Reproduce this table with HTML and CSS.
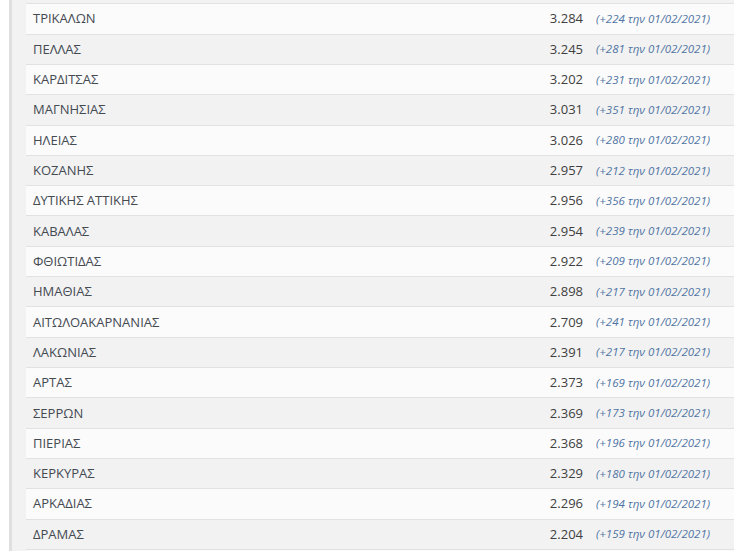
FILE: index.html
```html
<!DOCTYPE html>
<html lang="el">
<head>
<meta charset="utf-8">
<link rel="stylesheet" href="styles.css">
</head>
<body>
<div class="panel">
  <div class="list">
    <div class="row"><span class="name">ΤΡΙΚΑΛΩΝ</span><span class="num">3.284</span><span class="delta">(+224 την 01/02/2021)</span></div>
    <div class="row"><span class="name">ΠΕΛΛΑΣ</span><span class="num">3.245</span><span class="delta">(+281 την 01/02/2021)</span></div>
    <div class="row"><span class="name">ΚΑΡΔΙΤΣΑΣ</span><span class="num">3.202</span><span class="delta">(+231 την 01/02/2021)</span></div>
    <div class="row"><span class="name">ΜΑΓΝΗΣΙΑΣ</span><span class="num">3.031</span><span class="delta">(+351 την 01/02/2021)</span></div>
    <div class="row"><span class="name">ΗΛΕΙΑΣ</span><span class="num">3.026</span><span class="delta">(+280 την 01/02/2021)</span></div>
    <div class="row"><span class="name">ΚΟΖΑΝΗΣ</span><span class="num">2.957</span><span class="delta">(+212 την 01/02/2021)</span></div>
    <div class="row"><span class="name">ΔΥΤΙΚΗΣ ΑΤΤΙΚΗΣ</span><span class="num">2.956</span><span class="delta">(+356 την 01/02/2021)</span></div>
    <div class="row"><span class="name">ΚΑΒΑΛΑΣ</span><span class="num">2.954</span><span class="delta">(+239 την 01/02/2021)</span></div>
    <div class="row"><span class="name">ΦΘΙΩΤΙΔΑΣ</span><span class="num">2.922</span><span class="delta">(+209 την 01/02/2021)</span></div>
    <div class="row"><span class="name">ΗΜΑΘΙΑΣ</span><span class="num">2.898</span><span class="delta">(+217 την 01/02/2021)</span></div>
    <div class="row"><span class="name">ΑΙΤΩΛΟΑΚΑΡΝΑΝΙΑΣ</span><span class="num">2.709</span><span class="delta">(+241 την 01/02/2021)</span></div>
    <div class="row"><span class="name">ΛΑΚΩΝΙΑΣ</span><span class="num">2.391</span><span class="delta">(+217 την 01/02/2021)</span></div>
    <div class="row"><span class="name">ΑΡΤΑΣ</span><span class="num">2.373</span><span class="delta">(+169 την 01/02/2021)</span></div>
    <div class="row"><span class="name">ΣΕΡΡΩΝ</span><span class="num">2.369</span><span class="delta">(+173 την 01/02/2021)</span></div>
    <div class="row"><span class="name">ΠΙΕΡΙΑΣ</span><span class="num">2.368</span><span class="delta">(+196 την 01/02/2021)</span></div>
    <div class="row"><span class="name">ΚΕΡΚΥΡΑΣ</span><span class="num">2.329</span><span class="delta">(+180 την 01/02/2021)</span></div>
    <div class="row"><span class="name">ΑΡΚΑΔΙΑΣ</span><span class="num">2.296</span><span class="delta">(+194 την 01/02/2021)</span></div>
    <div class="row"><span class="name">ΔΡΑΜΑΣ</span><span class="num">2.204</span><span class="delta">(+159 την 01/02/2021)</span></div>
    <div class="row"><span class="name">&nbsp;</span><span class="num"></span><span class="delta"></span></div>
  </div>
</div>
</body>
</html>
```

FILE: styles.css
```css
html, body {
  margin: 0;
  padding: 0;
  background: #ffffff;
  overflow: hidden;
}

body {
  font-family: "Open Sans", "Noto Sans", sans-serif;
  color: #444444;
}

.panel {
  margin-left: 9px;
  border-left: 3px solid #dfdfdf;
  background: #f2f2f2;
  padding-left: 14px;
  padding-top: 3.3px;
}

.list {
  display: flex;
  flex-direction: column;
}

.row {
  display: flex;
  align-items: center;
  box-sizing: border-box;
  height: 30.32px;
  padding-bottom: 1px;
  border-top: 1px solid #e2e2e2;
  font-size: 13px;
}

.row:nth-child(odd) {
  background: #fbfbfb;
}

.row:nth-child(even) {
  background: #f2f2f2;
}

.name {
  flex: 1;
  padding-left: 7px;
  color: #444a52;
}

.num {
  color: #404040;
  text-align: right;
}

.delta {
  margin-left: 13px;
  margin-right: 24px;
  font-size: 11.5px;
  font-style: italic;
  color: #4f74a3;
}
```
